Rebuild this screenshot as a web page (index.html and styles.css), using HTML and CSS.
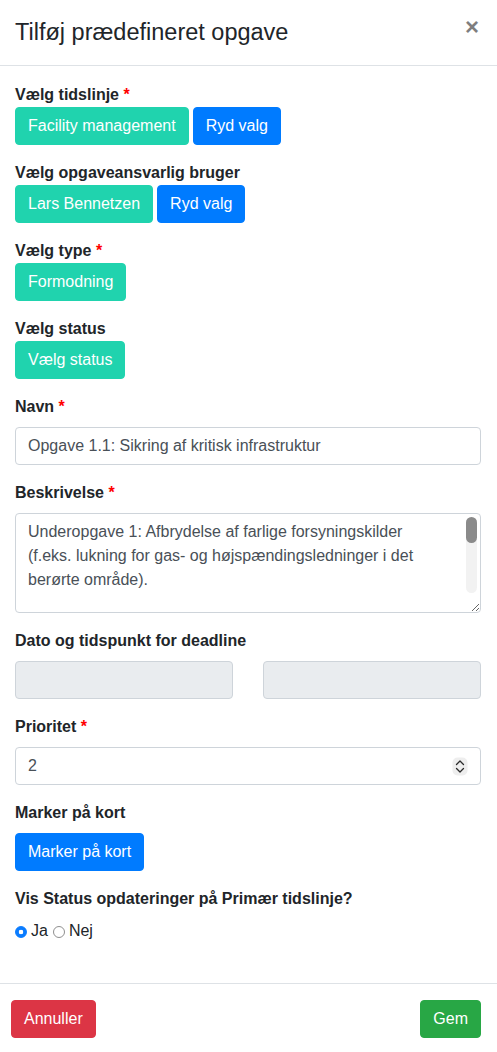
FILE: index.html
```html
<!DOCTYPE html>
<html lang="da">
<head>
<meta charset="utf-8">
<title>Tilføj prædefineret opgave</title>
<link rel="stylesheet" href="styles.css">
</head>
<body>
<div class="modal">
  <div class="modal-header">
    <h5 class="modal-title">Tilføj prædefineret opgave</h5>
    <button class="close" type="button" aria-label="Luk">×</button>
  </div>
  <div class="modal-body">
    <div class="form-group">
      <div class="label tight">Vælg tidslinje <span class="req">*</span></div>
      <div class="btn-row">
        <button class="btn btn-teal">Facility management</button>
        <button class="btn btn-blue">Ryd valg</button>
      </div>
    </div>
    <div class="form-group">
      <div class="label tight">Vælg opgaveansvarlig bruger</div>
      <div class="btn-row">
        <button class="btn btn-teal">Lars Bennetzen</button>
        <button class="btn btn-blue">Ryd valg</button>
      </div>
    </div>
    <div class="form-group">
      <div class="label tight">Vælg type <span class="req">*</span></div>
      <div class="btn-row">
        <button class="btn btn-teal">Formodning</button>
      </div>
    </div>
    <div class="form-group">
      <div class="label tight">Vælg status</div>
      <div class="btn-row">
        <button class="btn btn-teal">Vælg status</button>
      </div>
    </div>
    <div class="form-group">
      <label class="label" for="navn">Navn <span class="req">*</span></label>
      <input class="form-control" id="navn" type="text" value="Opgave 1.1: Sikring af kritisk infrastruktur">
    </div>
    <div class="form-group">
      <label class="label" for="beskr">Beskrivelse <span class="req">*</span></label>
      <div class="textarea-wrap">
        <textarea class="form-control textarea" id="beskr">Underopgave 1: Afbrydelse af farlige forsyningskilder
(f.eks. lukning for gas- og højspændingsledninger i det
berørte område).</textarea>
        <div class="scrollbar"><div class="scroll-thumb"></div></div>
      </div>
    </div>
    <div class="form-group">
      <div class="label">Dato og tidspunkt for deadline</div>
      <div class="date-row">
        <div class="form-control disabled"></div>
        <div class="form-control disabled"></div>
      </div>
    </div>
    <div class="form-group">
      <div class="label">Prioritet <span class="req">*</span></div>
      <div class="form-control number">
        <span>2</span>
        <svg class="spinner" width="16" height="19" viewBox="0 0 16 19">
          <rect x="0.5" y="0.5" width="15" height="18" rx="5" fill="#eeeeee"/>
          <path d="M4.5 7.5 L8 4 L11.5 7.5" fill="none" stroke="#2b2b2b" stroke-width="1.3" stroke-linecap="round" stroke-linejoin="round"/>
          <path d="M4.5 11.5 L8 15 L11.5 11.5" fill="none" stroke="#2b2b2b" stroke-width="1.3" stroke-linecap="round" stroke-linejoin="round"/>
        </svg>
      </div>
    </div>
    <div class="form-group">
      <div class="label">Marker på kort</div>
      <button class="btn btn-blue">Marker på kort</button>
    </div>
    <div class="form-group last">
      <div class="label">Vis Status opdateringer på Primær tidslinje?</div>
      <div class="radios">
        <label class="radio"><input type="radio" name="vis" checked><span>Ja</span></label>
        <label class="radio"><input type="radio" name="vis"><span>Nej</span></label>
      </div>
    </div>
  </div>
  <div class="modal-footer">
    <button class="btn btn-red">Annuller</button>
    <button class="btn btn-green">Gem</button>
  </div>
</div>
</body>
</html>
```
FILE: styles.css
```css
* { box-sizing: border-box; }

html, body {
  margin: 0;
  padding: 0;
  background: #ffffff;
}

body {
  font-family: "Liberation Sans", Arial, sans-serif;
  font-size: 16px;
  line-height: 24px;
  color: #212529;
}

.modal {
  width: 497px;
  min-height: 1052px;
  background: #fff;
}

.modal-header {
  display: flex;
  justify-content: space-between;
  align-items: flex-start;
  padding: 16px 16px 16px 15px;
  border-bottom: 1px solid #dee2e6;
}

.modal-title {
  margin: 0;
  font-size: 23.5px;
  font-weight: 400;
  line-height: 33px;
  color: #212529;
}

.close {
  border: 0;
  background: transparent;
  padding: 0;
  margin: -1px 2px 0 0;
  font-family: "Liberation Sans", Arial, sans-serif;
  font-size: 24px;
  font-weight: 700;
  line-height: 1;
  color: #000;
  opacity: 0.5;
}

.modal-body {
  padding: 17px 16px 24px 15px;
}

.form-group {
  margin-bottom: 16px;
}

.label {
  display: block;
  font-weight: 700;
  margin-bottom: 8px;
}

.label.tight {
  margin-bottom: 0;
}

.req {
  color: #ff0000;
}

.btn-row {
  display: flex;
  gap: 4px;
}

.btn {
  display: inline-block;
  font-family: "Liberation Sans", Arial, sans-serif;
  font-size: 16px;
  line-height: 24px;
  font-weight: 400;
  padding: 6px 12px;
  border: 1px solid transparent;
  border-radius: 4px;
  color: #fff;
  cursor: pointer;
}

.btn-teal { background: #20d3ae; border-color: #20d3ae; }
.btn-blue { background: #007bff; border-color: #007bff; }
.btn-red { background: #dc3545; border-color: #dc3545; }
.btn-green { background: #28a745; border-color: #28a745; }

.form-control {
  display: block;
  width: 100%;
  height: 38px;
  padding: 6px 12px;
  font-family: "Liberation Sans", Arial, sans-serif;
  font-size: 16px;
  line-height: 24px;
  color: #495057;
  background: #fff;
  border: 1px solid #ced4da;
  border-radius: 4px;
  margin: 0;
}

.textarea-wrap {
  position: relative;
}

.textarea {
  height: 100px;
  resize: vertical;
  padding-right: 20px;
}

.scrollbar {
  position: absolute;
  top: 4px;
  right: 4px;
  width: 11px;
  height: 76px;
  background: #f2f2f2;
  border-radius: 6px;
}

.scroll-thumb {
  height: 26px;
  background: #8a8a8a;
  border-radius: 6px;
}

.date-row {
  display: flex;
  gap: 30px;
}

.date-row .disabled {
  flex: 1;
  background: #e9ecef;
}

.number {
  display: flex;
  justify-content: space-between;
  align-items: center;
  padding-right: 12px;
}

.spinner {
  display: block;
}

.radios {
  display: flex;
  align-items: center;
  gap: 5px;
}

.radio {
  display: flex;
  align-items: center;
  gap: 4px;
  font-weight: 400;
}

.radio input {
  appearance: none;
  -webkit-appearance: none;
  width: 12px;
  height: 12px;
  margin: 1px 0 0 0;
  border-radius: 50%;
  border: 1px solid #8f8f8f;
  background: #fff;
}

.radio input:checked {
  border-color: #0a7cff;
  background: radial-gradient(circle, #ffffff 0 2px, #0a7cff 2.6px);
}

.modal-footer {
  display: flex;
  justify-content: space-between;
  align-items: center;
  border-top: 1px solid #dee2e6;
  padding: 16px 16px 14px 11px;
}
```
